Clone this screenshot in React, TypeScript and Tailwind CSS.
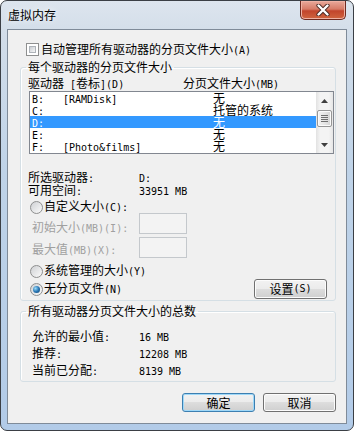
import React from 'react';

const cjk = "font-['Noto_Sans_CJK_SC','Noto_Sans_CJK_JP',sans-serif]";

// CJK text in Noto, ASCII runs in a narrow mono face (SimSun-like half width)
function T({ s }: { s: string }) {
  const parts = s.split(/([\x20-\x7e]+)/).filter(Boolean);
  return (
    <>
      {parts.map((p, i) =>
        /[\x20-\x7e]/.test(p) ? (
          <span key={i} className="font-['DejaVu_Sans_Mono',monospace] text-[10px] whitespace-pre">{p}</span>
        ) : (
          <React.Fragment key={i}>{p}</React.Fragment>
        )
      )}
    </>
  );
}

const Check = () => (
  <span className="w-[13px] h-[13px] border border-[#8e8f8f] bg-white p-[2px] flex shrink-0">
    <span className="flex-1 border border-[#aeb3b9] bg-linear-to-br from-[#c9cdd2] to-[#f7f7f7]" />
  </span>
);

const Radio = ({ on }: { on?: boolean }) => (
  <span className="w-[13px] h-[13px] rounded-full border border-[#8e8f8f] bg-linear-to-br from-[#cfd1d4] to-[#fbfbfb] flex items-center justify-center shrink-0">
    {on && <span className="w-[7px] h-[7px] rounded-full bg-radial-[at_35%_35%] from-[#9adcfb] via-[#2b78b5] to-[#0f3f6e]" />}
  </span>
);

const Btn = ({ label, def }: { label: string; def?: boolean }) => (
  <button
    className={
      def
        ? "w-[73px] h-[19px] rounded-[3px] border border-[#3c7fb1] shadow-[inset_0_0_0_1px_#9fd8f8] bg-[linear-gradient(#f2f2f2,#ebebeb_50%,#dddddd_50%,#cfcfcf)] flex items-center justify-center text-[12px] leading-[14px] text-black"
        : "w-[73px] h-[19px] rounded-[3px] border border-[#707070] shadow-[inset_0_0_0_1px_#fcfcfc] bg-[linear-gradient(#f2f2f2,#ebebeb_50%,#dddddd_50%,#cfcfcf)] flex items-center justify-center text-[12px] leading-[14px] text-black"
    }
  >
    <T s={label} />
  </button>
);

const Arrow = ({ up }: { up?: boolean }) => (
  <svg width="7" height="4" viewBox="0 0 7 4">
    <polygon points={up ? '3.5,0 7,4 0,4' : '0,0 7,0 3.5,4'} fill="#404040" />
  </svg>
);

const drives = [
  { d: 'B:', l: '[RAMDisk]', v: '无' },
  { d: 'C:', l: '', v: '托管的系统' },
  { d: 'D:', l: '', v: '无', sel: true },
  { d: 'E:', l: '', v: '无' },
  { d: 'F:', l: '[Photo&films]', v: '无' },
];

export default function App() {
  return (
    <div className={`w-[354px] h-[431px] bg-white ${cjk} text-[12px] text-black`}>
      <div className="relative w-[354px] h-[431px] rounded-[7px] border border-[#3b3f45] bg-[linear-gradient(180deg,#dde5ee_0%,#d2dde9_8%,#bfd3e8_40%,#b2cbe8_100%)] flex flex-col px-[6px] pb-[6px]">
        {/* title bar */}
        <div className="h-[28px] pt-[6px] pl-[1px] leading-[16px] text-[12px] [text-shadow:0_0_6px_#ffffff]">虚拟内存</div>
        <div className="absolute top-0 right-[7px] w-[46px] h-[19px] rounded-b-[5px] border border-t-0 border-[#6e2a20] bg-[linear-gradient(#e9a99b,#d67b67_45%,#c2452c_55%,#d0653f)] shadow-[inset_0_0_0_1px_#efb2a4] flex items-center justify-center">
          <svg width="14" height="12" viewBox="0 0 14 12">
            <path d="M2.5 1.5 L11.5 10.5 M11.5 1.5 L2.5 10.5" stroke="#4b2a25" strokeWidth="4.2" strokeLinecap="round" />
            <path d="M2.5 1.5 L11.5 10.5 M11.5 1.5 L2.5 10.5" stroke="#ffffff" strokeWidth="2.4" strokeLinecap="round" />
          </svg>
        </div>

        {/* client area */}
        <div className="flex-1 bg-[#f0f0f0] border border-[#7f8b99] flex flex-col">
          <div className="mt-[13px] ml-[18px] h-[13px] flex items-center gap-[2px] leading-[14px]">
            <Check />
            <span><T s="自动管理所有驱动器的分页文件大小(A)" /></span>
          </div>

          <fieldset className="mt-[3px] ml-[12px] w-[316px] border border-[#d5dfe5] rounded-[3px] shadow-[inset_1px_1px_0_#ffffff] pb-[1px]">
            <legend className="ml-[5px] px-[2px] leading-[16px]">每个驱动器的分页文件大小</legend>

            <div className="mt-[1px] h-[14px] leading-[14px] flex pl-[7px]">
              <span className="w-[155px]"><T s="驱动器 [卷标](D)" /></span>
              <span><T s="分页文件大小(MB)" /></span>
            </div>

            <div className="mt-[1px] ml-[8px] w-[305px] h-[63px] border border-[#828790] bg-white flex">
              <div className="flex-1 pt-0 flex flex-col">
                {drives.map((r) => (
                  <div
                    key={r.d}
                    className={`h-[12px] leading-[12px] flex pl-[2px] ${r.sel ? 'bg-[#3399ff] text-white' : ''}`}
                  >
                    <span className="w-[31px]"><T s={r.d} /></span>
                    <span className="w-[150px]"><T s={r.l} /></span>
                    <span>{r.v}</span>
                  </div>
                ))}
              </div>
              <div className="w-[17px] bg-[linear-gradient(90deg,#e2e2e2,#f4f4f4_25%,#f4f4f4_75%,#e6e6e6)] flex flex-col items-center">
                <div className="h-[17px] flex items-center justify-center"><Arrow up /></div>
                <div className="mt-[1px] w-[15px] h-[17px] rounded-[2px] border border-[#979797] bg-[linear-gradient(90deg,#f3f3f3,#e6e6e6_50%,#d4d4d4)] shadow-[inset_0_0_0_1px_#fbfbfb] flex flex-col items-center justify-center gap-[1px]">
                  <span className="w-[7px] h-[1px] bg-[#6f6f6f]" />
                  <span className="w-[7px] h-[1px] bg-[#6f6f6f]" />
                  <span className="w-[7px] h-[1px] bg-[#6f6f6f]" />
                  <span className="w-[7px] h-[1px] bg-[#6f6f6f]" />
                </div>
                <div className="flex-1" />
                <div className="h-[17px] flex items-center justify-center"><Arrow /></div>
              </div>
            </div>

            <div className="mt-[16px] pl-[7px] h-[13px] leading-[13px] flex">
              <span className="w-[111px]"><T s="所选驱动器:" /></span>
              <span><T s="D:" /></span>
            </div>
            <div className="pl-[7px] h-[13px] leading-[13px] flex">
              <span className="w-[111px]"><T s="可用空间:" /></span>
              <span><T s="33951 MB" /></span>
            </div>

            <div className="mt-[5px] pl-[9px] h-[12px] leading-[12px] flex items-center gap-[1px]">
              <Radio />
              <span><T s="自定义大小(C):" /></span>
            </div>
            <div className="h-[21px] flex pl-[11px] text-[#a0a0a0]">
              <span className="w-[107px] pt-[7px] leading-[14px]"><T s="初始大小(MB)(I):" /></span>
              <span className="w-[48px] h-[21px] border border-[#c4c8cc] bg-[#f3f3f3]" />
            </div>
            <div className="mt-[3px] h-[21px] flex pl-[11px] text-[#a0a0a0]">
              <span className="w-[107px] pt-[5px] leading-[14px]"><T s="最大值(MB)(X):" /></span>
              <span className="w-[48px] h-[21px] border border-[#c4c8cc] bg-[#f3f3f3]" />
            </div>

            <div className="mt-[6px] pl-[9px] h-[14px] leading-[14px] flex items-center gap-[1px]">
              <Radio />
              <span><T s="系统管理的大小(Y)" /></span>
            </div>
            <div className="mt-[1px] pl-[9px] pr-[8px] h-[20px] leading-[14px] flex items-center gap-[1px]">
              <Radio on />
              <span className="flex-1"><T s="无分页文件(N)" /></span>
              <button className="w-[73px] h-[20px] rounded-[3px] border border-[#707070] shadow-[inset_0_0_0_1px_#fcfcfc] bg-[linear-gradient(#f2f2f2,#ebebeb_50%,#dddddd_50%,#cfcfcf)] flex items-center justify-center text-[12px] leading-[14px]">
                <T s="设置(S)" />
              </button>
            </div>
          </fieldset>

          <fieldset className="mt-[2px] ml-[12px] w-[316px] border border-[#d5dfe5] rounded-[3px] shadow-[inset_1px_1px_0_#ffffff] pb-[3px]">
            <legend className="ml-[5px] px-[2px] leading-[16px]">所有驱动器分页文件大小的总数</legend>
            <div className="mt-[8px] pl-[11px] h-[17px] leading-[17px] flex">
              <span className="w-[107px]"><T s="允许的最小值:" /></span>
              <span><T s="16 MB" /></span>
            </div>
            <div className="pl-[11px] h-[17px] leading-[17px] flex">
              <span className="w-[107px]"><T s="推荐:" /></span>
              <span><T s="12208 MB" /></span>
            </div>
            <div className="pl-[11px] h-[17px] leading-[17px] flex">
              <span className="w-[107px]"><T s="当前已分配:" /></span>
              <span><T s="8139 MB" /></span>
            </div>
          </fieldset>

          <div className="mt-[11px] pr-[10px] flex justify-end gap-[8px]">
            <Btn label="确定" def />
            <Btn label="取消" />
          </div>
        </div>
      </div>
    </div>
  );
}
